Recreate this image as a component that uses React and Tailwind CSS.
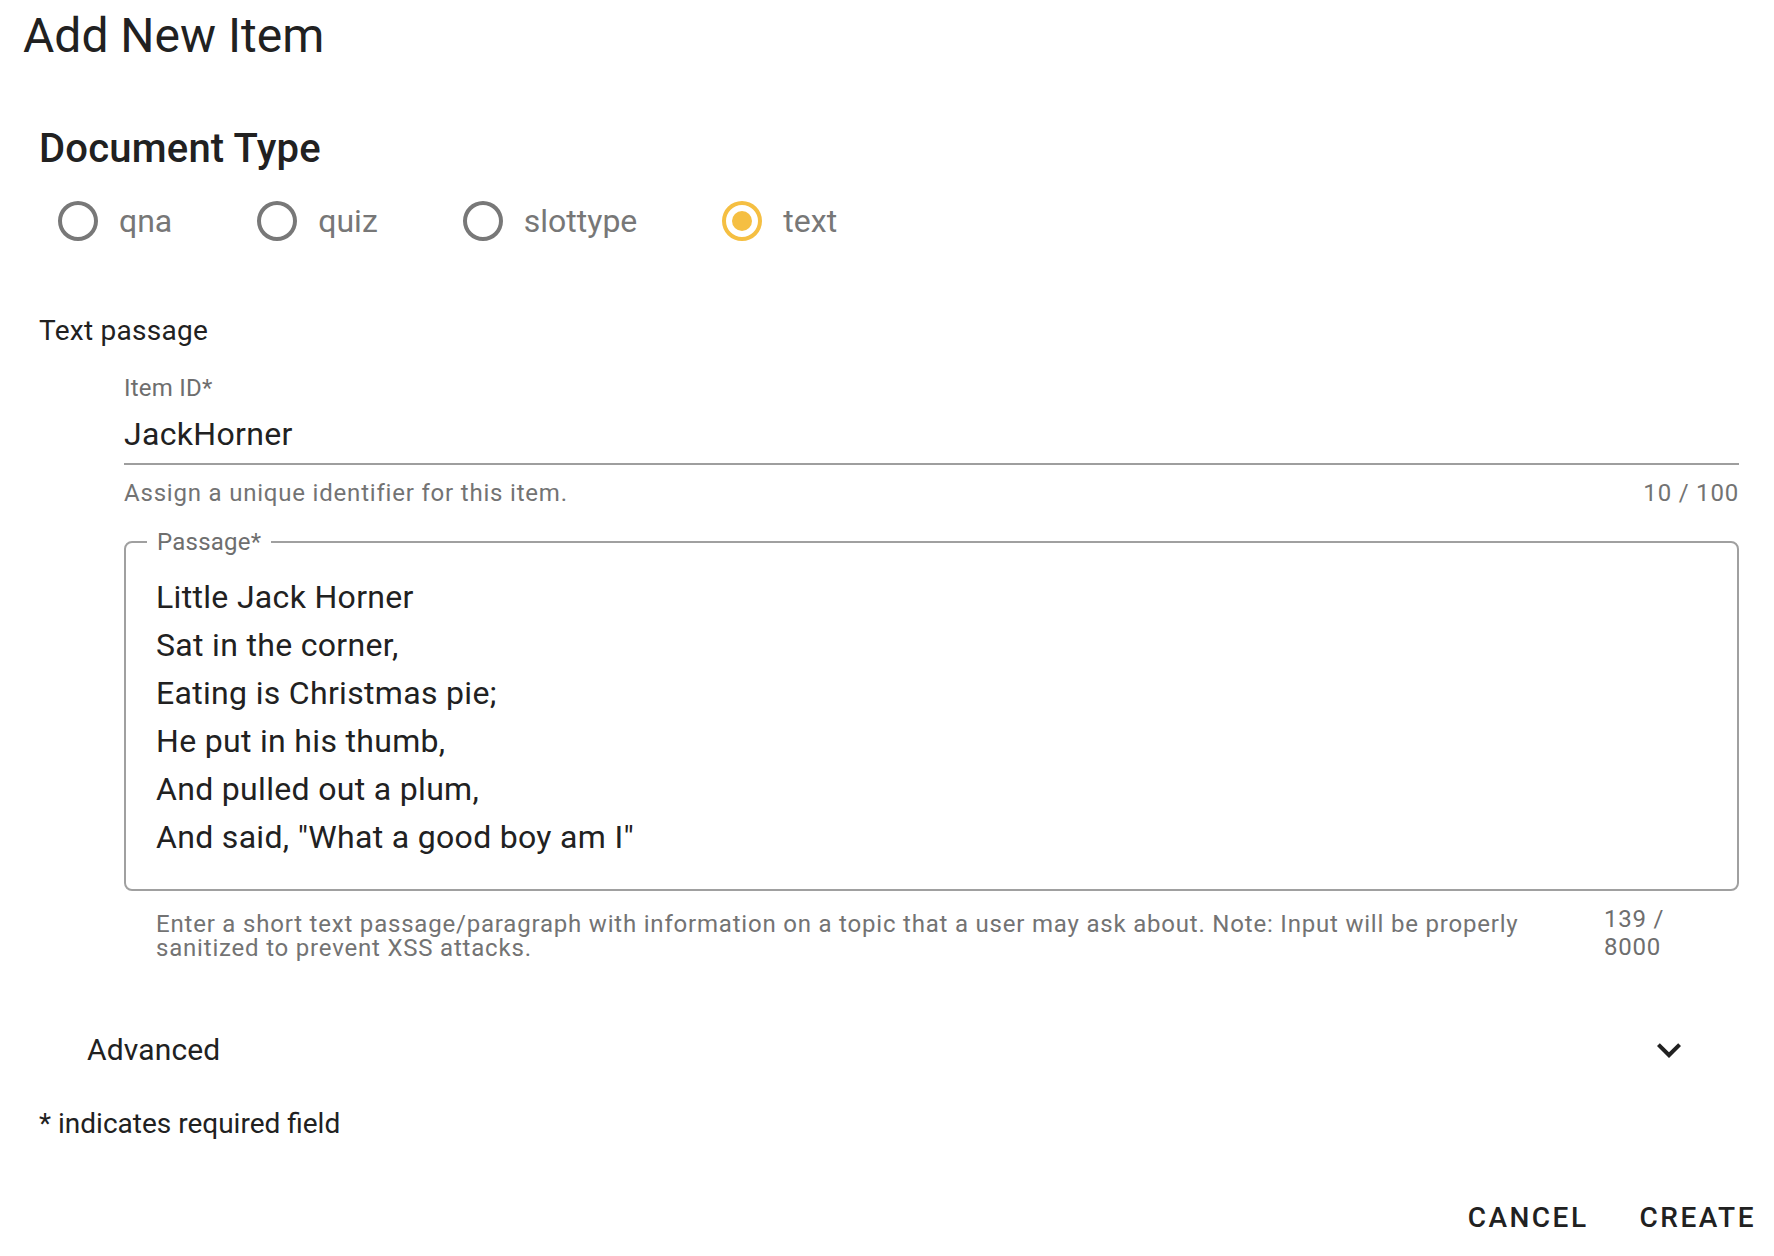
import React, { useState } from 'react';

const types = ['qna', 'quiz', 'slottype', 'text'];

const passage = [
  'Little Jack Horner',
  'Sat in the corner,',
  'Eating is Christmas pie;',
  'He put in his thumb,',
  'And pulled out a plum,',
  'And said, "What a good boy am I"',
];

function RadioIcon({ checked }) {
  return (
    <svg viewBox="0 0 24 24" className="w-[48px] h-[48px]" fill={checked ? '#f5bf42' : '#787878'}>
      <path d="M12,20A8,8 0 0,1 4,12A8,8 0 0,1 12,4A8,8 0 0,1 20,12A8,8 0 0,1 12,20M12,2A10,10 0 0,0 2,12A10,10 0 0,0 12,22A10,10 0 0,0 22,12A10,10 0 0,0 12,2Z" />
      {checked && <path d="M12,7A5,5 0 0,0 7,12A5,5 0 0,0 12,17A5,5 0 0,0 17,12A5,5 0 0,0 12,7Z" />}
    </svg>
  );
}

export default function App() {
  const [docType, setDocType] = useState('text');
  const [open, setOpen] = useState(false);

  return (
    <div className="min-h-screen bg-white text-[#212121] font-['Roboto','Liberation_Sans',sans-serif]">
      {/* title */}
      <div className="pt-[8px] pl-[23px] h-[64px] text-[48px] leading-[56px]">Add New Item</div>

      <div className="pl-[39px] pr-[35px]">
        <h2 className="mt-[61px] h-[48px] text-[40px] leading-[48px] font-medium tracking-[0.005em]">
          Document Type
        </h2>

        {/* document type radios */}
        <div className="mt-[24px] h-[48px] flex items-center gap-[81px] pl-[15px]">
          {types.map((t) => (
            <label key={t} className="flex items-center cursor-pointer" onClick={() => setDocType(t)}>
              <RadioIcon checked={docType === t} />
              <span className="ml-[17px] text-[32px] leading-[48px] text-[#777777]">{t}</span>
            </label>
          ))}
        </div>

        <div className="mt-[66px] h-[40px] text-[28px] leading-[40px] tracking-[0.01em]">Text passage</div>

        <div className="pl-[85px]">
          {/* item id */}
          <div className="mt-[21px] h-[32px] text-[24px] leading-[32px] text-[#6e6e6e] tracking-[0.01em]">Item ID*</div>
          <div className="mt-[6px] pb-[5px] border-b-2 border-[#9e9e9e]">
            <div className="h-[48px] text-[32px] leading-[48px] tracking-[0.01em]">JackHorner</div>
          </div>
          <div className="mt-[16px] h-[24px] flex justify-between text-[24px] leading-[24px] text-[#737373] tracking-[0.0333em]">
            <span>Assign a unique identifier for this item.</span>
            <span>10 / 100</span>
          </div>

          {/* passage */}
          <div className="relative mt-[36px] border-2 border-[#a0a0a0] rounded-[8px] pt-[30px] pb-[28px] pl-[30px]">
            <span className="absolute left-[21px] top-[-17px] px-[10px] bg-white text-[24px] leading-[32px] text-[#6e6e6e] tracking-[0.01em]">
              Passage*
            </span>
            {passage.map((line) => (
              <div key={line} className="h-[48px] text-[32px] leading-[48px] tracking-[0.01em]">{line}</div>
            ))}
          </div>

          <div className="mt-[21px] flex items-start text-[24px] text-[#737373] tracking-[0.0333em]">
            <p className="flex-1 pl-[32px] pr-[24px] leading-[24px]">
              Enter a short text passage/paragraph with information on a topic that a user may ask about. Note: Input will be properly sanitized to prevent XSS attacks.
            </p>
            <span className="w-[64px] mr-[71px] -mt-[7px] leading-[28px] text-[#6e6e6e]">139 / 8000</span>
          </div>
        </div>

        {/* advanced */}
        <button
          onClick={() => setOpen(!open)}
          className="mt-[49px] h-[80px] w-full flex items-center justify-between pl-[48px] pr-[46px] text-[30px] leading-[40px] tracking-[0.005em]"
        >
          <span>Advanced</span>
          <svg viewBox="0 0 24 24" className={`w-[48px] h-[48px] ${open ? 'rotate-180' : ''}`} fill="#212121">
            <path d="M7.41,8.58L12,13.17L16.59,8.58L18,10L12,16L6,10L7.41,8.58Z" />
          </svg>
        </button>

        <div className="mt-[14px] h-[40px] text-[28px] leading-[40px]">* indicates required field</div>
      </div>

      {/* actions */}
      <div className="mt-[38px] flex justify-end gap-[19px] pr-[2px]">
        <button className="h-[72px] px-[16px] text-[28px] font-medium uppercase tracking-[0.0892em]">Cancel</button>
        <button className="h-[72px] px-[16px] text-[28px] font-medium uppercase tracking-[0.0892em]">Create</button>
      </div>
    </div>
  );
}
